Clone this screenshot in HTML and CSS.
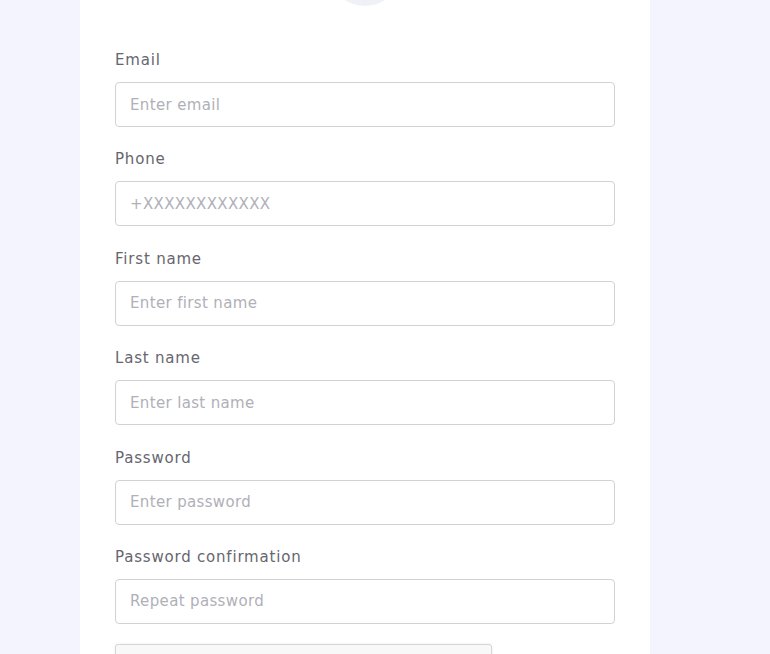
FILE: index.html
```html
<!DOCTYPE html>
<html lang="en">
<head>
<meta charset="utf-8">
<title>Sign up</title>
<link rel="stylesheet" href="styles.css">
</head>
<body>
<div class="page">
  <main class="card">
    <div class="avatar-wrap"><div class="avatar"></div></div>
    <form class="form">
      <div class="field">
        <label class="label" for="email">Email</label>
        <input class="input" id="email" type="text" placeholder="Enter email">
      </div>
      <div class="field">
        <label class="label" for="phone">Phone</label>
        <input class="input" id="phone" type="text" placeholder="+XXXXXXXXXXXX">
      </div>
      <div class="field">
        <label class="label" for="first">First name</label>
        <input class="input" id="first" type="text" placeholder="Enter first name">
      </div>
      <div class="field">
        <label class="label" for="last">Last name</label>
        <input class="input" id="last" type="text" placeholder="Enter last name">
      </div>
      <div class="field">
        <label class="label" for="pw">Password</label>
        <input class="input" id="pw" type="password" placeholder="Enter password">
      </div>
      <div class="field">
        <label class="label" for="pw2">Password confirmation</label>
        <input class="input" id="pw2" type="password" placeholder="Repeat password">
      </div>
      <div class="captcha"></div>
    </form>
  </main>
</div>
</body>
</html>
```
FILE: styles.css
```css
html, body {
  margin: 0;
  padding: 0;
  background: #f4f4fe;
  font-family: "DejaVu Sans", "Open Sans", sans-serif;
}
.page {
  width: 770px;
  height: 654px;
  overflow: hidden;
}
.card {
  margin-left: 80px;
  width: 570px;
  min-height: 800px;
  background: #ffffff;
  margin-top: -66px;
  box-sizing: border-box;
  padding: 0 35px;
}
.avatar-wrap {
  display: flex;
  justify-content: center;
  padding-bottom: 43px;
}
.avatar {
  width: 72px;
  height: 72px;
  border-radius: 50%;
  background: #eef1f6;
}
.form {
  display: flex;
  flex-direction: column;
}
.field {
  display: flex;
  flex-direction: column;
  margin-bottom: 21.4px;
}
.label {
  font-size: 15px;
  line-height: 22px;
  letter-spacing: 0.8px;
  color: #66666f;
  margin-bottom: 11px;
}
.input {
  height: 45px;
  box-sizing: border-box;
  border: 1px solid #d2d2d6;
  border-radius: 4px;
  padding: 0 14px;
  font-family: inherit;
  font-size: 15px;
  letter-spacing: 0.35px;
  color: #444;
  outline: none;
  background: #fff;
}
.input::placeholder {
  color: #b0b0b8;
}
.captcha {
  margin-top: -1px;
  width: 377px;
  height: 78px;
  box-sizing: border-box;
  border: 1px solid #d6d6d6;
  border-radius: 3px;
  background: #f8f8f8;
  box-shadow: 0 0 3px rgba(0,0,0,0.08);
}
```
